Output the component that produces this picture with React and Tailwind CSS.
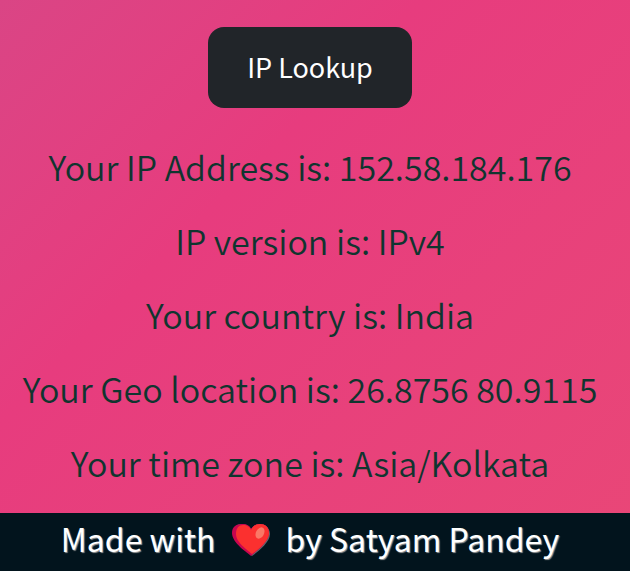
const details = [
  { label: "Your IP Address is:", value: "152.58.184.176" },
  { label: "IP version is:", value: "IPv4" },
  { label: "Your country is:", value: "India" },
  { label: "Your Geo location is:", value: "26.8756 80.9115" },
  { label: "Your time zone is:", value: "Asia/Kolkata" },
];

function Heart() {
  return (
    <svg viewBox="0 0 38 34" className="h-[34px] w-[38px]" role="img" aria-label="love">
      <path d="M20 33C17 30 1 20 1 10C1 4 5 1 10 1C15 1 18 4 19 6C21 3 24 1 28 1C33 1 38 5 38 11C38 20 24 30 20 33Z" fill="#64686b" />
      <path d="M19 33C16 30 0 20 0 10C0 4 4 1 10 1C15 1 18 3 19 6C21 3 24 1 28 1C33 1 37 4 37 10C37 20 22 30 19 33Z" fill="#c9054f" />
      <path d="M20 31C17 28 4 20 4 11C4 5 7 2 11 2C15 2 18 4 19 7C21 3 24 1 28 1C33 1 37 4 37 10C37 19 24 28 20 31Z" fill="#fb302f" />
      <ellipse cx="28" cy="10" rx="4" ry="6" transform="rotate(28 28 10)" fill="#fa7866" />
    </svg>
  );
}

export default function App() {
  return (
    <div className="flex min-h-screen flex-col bg-linear-135 from-[#da4585] via-[#e73c7e] via-35% to-[#e94777] font-['Noto_Sans_CJK_SC',sans-serif]">
      <main className="flex flex-1 flex-col items-center pt-[27px] pr-2.5">
        <button type="button" className="rounded-2xl bg-[#212529] px-[39px] pt-[19px] pb-[21px] text-[27px] leading-[41px] text-white">
          IP Lookup
        </button>
        <div className="mt-[22px] text-center text-[34px] leading-[74px] font-[350] whitespace-nowrap text-[#10352f]">
          {details.map(({ label, value }) => (
            <p key={label}>
              {label} {value}
            </p>
          ))}
        </div>
      </main>
      <footer className="flex h-[58px] items-center justify-center gap-4 bg-[#02141d] pr-2.5 pb-1 text-[32px] leading-[50px] whitespace-nowrap text-white [text-shadow:1px_1px_1px_#9a9a9a]">
        <span className="pb-1">Made with</span>
        <Heart />
        <span className="pb-1">by Satyam Pandey</span>
      </footer>
    </div>
  );
}
